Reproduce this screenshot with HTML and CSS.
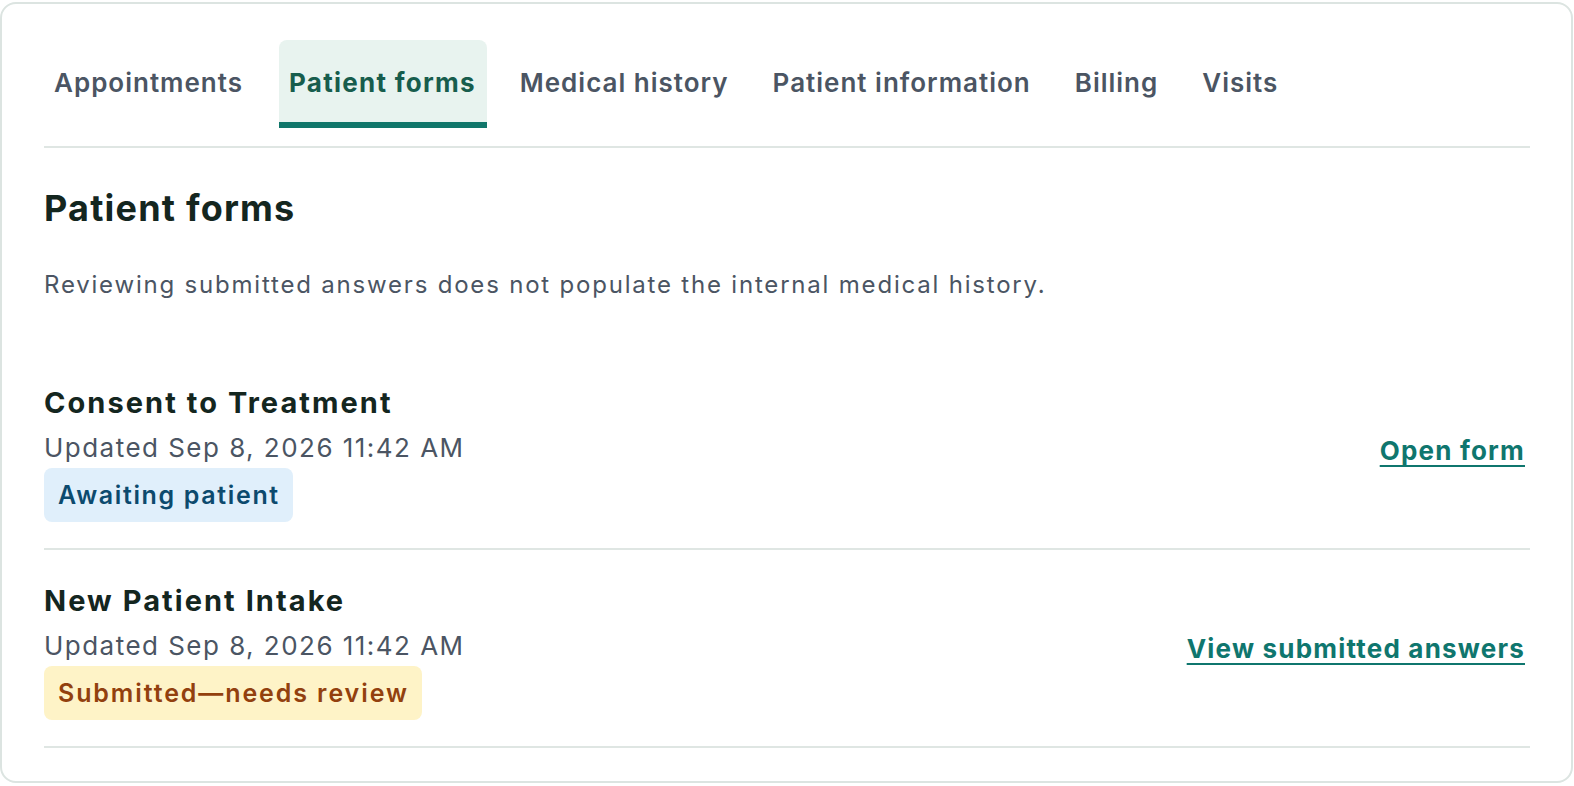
FILE: index.html
```html
<!DOCTYPE html>
<html lang="en">
<head>
<meta charset="utf-8">
<title>Patient forms</title>
<link rel="stylesheet" href="styles.css">
</head>
<body>
<div class="card">
  <nav class="tabs">
    <a class="tab">Appointments</a>
    <a class="tab tab-active">Patient forms</a>
    <a class="tab">Medical history</a>
    <a class="tab">Patient information</a>
    <a class="tab">Billing</a>
    <a class="tab">Visits</a>
  </nav>
  <section class="section">
    <h2 class="section-title">Patient forms</h2>
    <p class="section-desc">Reviewing submitted answers does not populate the internal medical history.</p>
    <ul class="form-list">
      <li class="form-row">
        <div class="form-info">
          <div class="form-name">Consent to Treatment</div>
          <div class="form-meta">Updated Sep 8, 2026 11:42 AM</div>
          <span class="badge badge-blue">Awaiting patient</span>
        </div>
        <a class="form-link" href="#">Open form</a>
      </li>
      <li class="form-row">
        <div class="form-info">
          <div class="form-name">New Patient Intake</div>
          <div class="form-meta">Updated Sep 8, 2026 11:42 AM</div>
          <span class="badge badge-yellow">Submitted—needs review</span>
        </div>
        <a class="form-link" href="#">View submitted answers</a>
      </li>
    </ul>
  </section>
</div>
</body>
</html>
```
FILE: styles.css
```css
* { box-sizing: border-box; }
html, body { margin: 0; background: #ffffff; }
body {
  padding: 2px 1px 2px 0;
  font-family: Inter, "Noto Sans", "Liberation Sans", sans-serif;
  color: #14261f;
}
.card {
  border: 2px solid #dce4e1;
  border-radius: 16px;
  padding: 36px 41px 33px 42px;
  background: #fff;
}
.tabs {
  display: flex;
  gap: 23px;
  padding-bottom: 18px;
  border-bottom: 2px solid #dfe6e3;
}
.tab {
  display: block;
  padding: 0 11px 0 10px;
  height: 88px;
  line-height: 85px;
  font-size: 26px;
  font-weight: 600;
  letter-spacing: 1px;
  color: #4b5563;
  border-bottom: 6px solid transparent;
  border-radius: 8px 8px 0 0;
  white-space: nowrap;
}
.tab:first-child { padding-right: 13px; }
.tab-active {
  background: #e8f3ef;
  color: #175d4d;
  font-weight: 700;
  letter-spacing: 1.26px;
  border-bottom-color: #10766a;
}
.section-title {
  margin: 38px 0 0;
  font-size: 36px;
  line-height: 44px;
  font-weight: 700;
  letter-spacing: 1.2px;
  color: #14261f;
}
.section-desc {
  margin: 40px 0 0;
  font-size: 24px;
  line-height: 30px;
  letter-spacing: 1.8px;
  color: #4b5563;
}
.form-list {
  list-style: none;
  margin: 52px 0 0;
  padding: 0;
}
.form-row {
  display: flex;
  align-items: center;
  justify-content: space-between;
  padding: 33px 5px 26px 0;
  border-bottom: 2px solid #dfe6e3;
}
.form-info {
  display: flex;
  flex-direction: column;
  align-items: flex-start;
}
.form-name {
  font-size: 29px;
  line-height: 35px;
  font-weight: 700;
  letter-spacing: 2.05px;
  color: #14261f;
}
.form-meta {
  margin-top: 12px;
  font-size: 26px;
  line-height: 31px;
  letter-spacing: 1.47px;
  color: #4b5563;
}
.badge {
  margin-top: 5px;
  padding: 0 13px 0 14px;
  height: 54px;
  line-height: 54px;
  border-radius: 8px;
  font-size: 25px;
  font-weight: 600;
  letter-spacing: 1.65px;
}
.badge-blue { background: #e0effb; color: #0c4a6e; }
.badge-yellow { background: #fef3c7; color: #92400e; letter-spacing: 1.9px; }
.form-link {
  margin-bottom: 6px;
  font-size: 26px;
  font-weight: 700;
  letter-spacing: 1.2px;
  color: #0f766e;
  text-decoration: underline;
  text-decoration-thickness: 2px;
  text-underline-offset: 5px;
}
```
